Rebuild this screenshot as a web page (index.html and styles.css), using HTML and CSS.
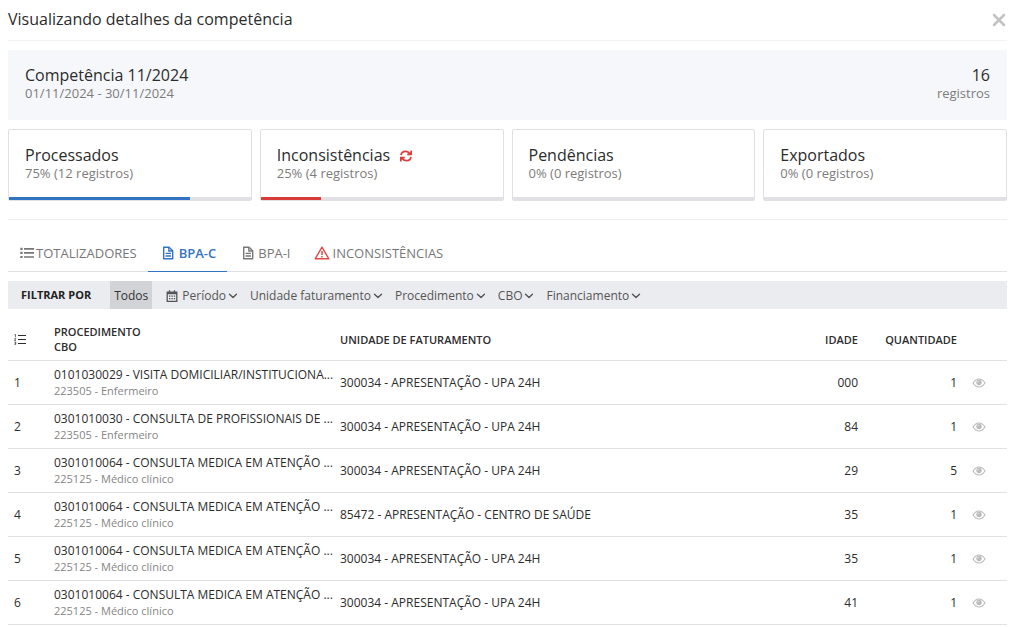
FILE: index.html
```html
<!DOCTYPE html>
<html lang="pt-BR">
<head>
<meta charset="utf-8">
<title>Visualizando detalhes da competência</title>
<link rel="stylesheet" href="styles.css">
</head>
<body>
<svg class="symbols" aria-hidden="true">
  <symbol id="i-eye" viewBox="0 0 14 10"><path d="M1 5Q3.600 1 7 1T13 5Q10.400 9 7 9T1 5Z" fill="none" stroke="currentColor" stroke-width="1.200"/><circle cx="7" cy="4.500" r="2.700" fill="currentColor"/><path d="M5.700 4.300Q5.800 3.200 7 3.100" fill="none" stroke="#fff" stroke-width=".6"/></symbol>
  <symbol id="i-down" viewBox="0 0 10 6"><path d="M1.500 1.200 5 4.600 8.500 1.200" fill="none" stroke="currentColor" stroke-width="1.400" stroke-linecap="round" stroke-linejoin="round"/></symbol>
  <symbol id="i-file" viewBox="0 0 12 14"><path d="M1.700 1.200H7L10.700 4.700V12.800H1.700Z" fill="none" stroke="currentColor" stroke-width="1.400" stroke-linejoin="round"/><path d="M6.800 1.200V5H10.700M3.500 7.400H9M3.500 10H9" fill="none" stroke="currentColor" stroke-width="1.300"/></symbol>
</svg>
<header class="header">
  <h1 class="title">Visualizando detalhes da competência</h1>
  <button class="close" type="button" aria-label="Fechar"><svg width="14" height="14" viewBox="0 0 14 14"><path d="M2 2 12 12M12 2 2 12" stroke="currentColor" stroke-width="2.500" stroke-linecap="round"/></svg></button>
</header>
<main>
  <section class="summary">
    <div><h2 class="name">Competência 11/2024</h2><p class="note">01/11/2024 - 30/11/2024</p></div>
    <div class="total"><p class="name">16</p><p class="note">registros</p></div>
  </section>
  <section class="cards">
    <article class="card"><div class="card-body"><h2 class="name">Processados</h2><p class="note">75% (12 registros)</p></div><div class="bar"><div class="fill blue" style="width:75%"></div></div></article>
    <article class="card"><div class="card-body"><h2 class="name with-action">Inconsistências <button class="refresh" type="button" aria-label="Reprocessar"><svg width="12" height="12" viewBox="0 0 12 12"><path d="M1 5.200C1.300 2.800 3.300 1.300 5.700 1.300C7.600 1.300 9 2.200 10.300 3.700M11.200.4V4.400H7.200M11 6.800C10.700 9.200 8.700 10.700 6.300 10.700C4.400 10.700 3 9.800 1.700 8.300M.8 11.600V7.600H4.800" fill="none" stroke="currentColor" stroke-width="1.700"/><path d="M9 4.400H11.200V2.200ZM3 7.600H.8V9.800Z" fill="currentColor"/></svg></button></h2><p class="note">25% (4 registros)</p></div><div class="bar"><div class="fill red" style="width:25%"></div></div></article>
    <article class="card"><div class="card-body"><h2 class="name">Pendências</h2><p class="note">0% (0 registros)</p></div><div class="bar"></div></article>
    <article class="card"><div class="card-body"><h2 class="name">Exportados</h2><p class="note">0% (0 registros)</p></div><div class="bar"></div></article>
  </section>
  <nav class="tabs">
    <a class="tab" href="#totalizadores"><span class="tab-icon"><svg width="14" height="12" viewBox="0 0 14 12"><path d="M.3 1.800H2.600M.3 5.900H2.600M.3 10H2.600" stroke="currentColor" stroke-width="2.200"/><path d="M4 1.800H14M4 5.900H14M4 10H14" stroke="currentColor" stroke-width="1.700"/></svg></span>TOTALIZADORES</a>
    <a class="tab active" href="#bpa-c"><span class="tab-icon"><svg width="12" height="14"><use href="#i-file"/></svg></span>BPA-C</a>
    <a class="tab" href="#bpa-i"><span class="tab-icon"><svg width="12" height="14"><use href="#i-file"/></svg></span>BPA-I</a>
    <a class="tab" href="#inconsistencias"><span class="tab-icon alert"><svg width="16" height="14" viewBox="0 0 16 14"><path d="M8 1.200 14.800 12.800H1.200Z" fill="none" stroke="currentColor" stroke-width="1.400" stroke-linejoin="round"/><path d="M8 5V9M8 10V11.500" stroke="currentColor" stroke-width="1.500"/></svg></span>INCONSISTÊNCIAS</a>
  </nav>
  <div class="filters">
    <strong class="filter-label">FILTRAR POR</strong>
    <button class="filter all" type="button">Todos</button>
    <button class="filter" type="button"><svg class="calendar" width="12" height="12" viewBox="0 0 12 12"><path d="M1.200 2.200H10.800V11.300H1.200ZM1 3.500H11M3.500.2V3M8.500.2V3" fill="none" stroke="currentColor" stroke-width="1.300"/><path d="M3 6.200H9.400M3 8.700H9.400" stroke="currentColor" stroke-width="1.300" stroke-dasharray="1.400 1"/></svg>Período<svg width="10" height="6"><use href="#i-down"/></svg></button>
    <button class="filter" type="button">Unidade faturamento<svg width="10" height="6"><use href="#i-down"/></svg></button>
    <button class="filter" type="button">Procedimento<svg width="10" height="6"><use href="#i-down"/></svg></button>
    <button class="filter" type="button">CBO<svg width="10" height="6"><use href="#i-down"/></svg></button>
    <button class="filter" type="button">Financiamento<svg width="10" height="6"><use href="#i-down"/></svg></button>
  </div>
  <table class="table">
    <colgroup><col class="c-num"><col class="c-proc"><col><col class="c-age"><col class="c-qty"><col class="c-act"></colgroup>
    <thead><tr>
      <th class="order" aria-label="Ordem"><svg width="12" height="11" viewBox="0 0 12 11"><path d="M4 1.500H12M4 5.500H12M4 9.500H12" stroke="currentColor" stroke-width="1.100"/><path d="M.5.5H1.500V3M.4 4.300H1.800L.5 6.400H2M.4 8H1.800V10.400H.4M.6 9.200H1.800" fill="none" stroke="currentColor" stroke-width=".7"/></svg></th>
      <th>PROCEDIMENTO<br>CBO</th><th>UNIDADE DE FATURAMENTO</th><th class="num">IDADE</th><th class="num">QUANTIDADE</th><th></th>
    </tr></thead>
    <tbody>
      <tr><td>1</td><td>0101030029 - VISITA DOMICILIAR/INSTITUCIONA...<span class="cbo">223505 - Enfermeiro</span></td><td>300034 - APRESENTAÇÃO - UPA 24H</td><td class="num">000</td><td class="num">1</td><td><button class="view" type="button" aria-label="Visualizar"><svg width="14" height="10"><use href="#i-eye"/></svg></button></td></tr>
      <tr><td>2</td><td>0301010030 - CONSULTA DE PROFISSIONAIS DE ...<span class="cbo">223505 - Enfermeiro</span></td><td>300034 - APRESENTAÇÃO - UPA 24H</td><td class="num">84</td><td class="num">1</td><td><button class="view" type="button" aria-label="Visualizar"><svg width="14" height="10"><use href="#i-eye"/></svg></button></td></tr>
      <tr><td>3</td><td>0301010064 - CONSULTA MEDICA EM ATENÇÃO ...<span class="cbo">225125 - Médico clínico</span></td><td>300034 - APRESENTAÇÃO - UPA 24H</td><td class="num">29</td><td class="num">5</td><td><button class="view" type="button" aria-label="Visualizar"><svg width="14" height="10"><use href="#i-eye"/></svg></button></td></tr>
      <tr><td>4</td><td>0301010064 - CONSULTA MEDICA EM ATENÇÃO ...<span class="cbo">225125 - Médico clínico</span></td><td>85472 - APRESENTAÇÃO - CENTRO DE SAÚDE</td><td class="num">35</td><td class="num">1</td><td><button class="view" type="button" aria-label="Visualizar"><svg width="14" height="10"><use href="#i-eye"/></svg></button></td></tr>
      <tr><td>5</td><td>0301010064 - CONSULTA MEDICA EM ATENÇÃO ...<span class="cbo">225125 - Médico clínico</span></td><td>300034 - APRESENTAÇÃO - UPA 24H</td><td class="num">35</td><td class="num">1</td><td><button class="view" type="button" aria-label="Visualizar"><svg width="14" height="10"><use href="#i-eye"/></svg></button></td></tr>
      <tr><td>6</td><td>0301010064 - CONSULTA MEDICA EM ATENÇÃO ...<span class="cbo">225125 - Médico clínico</span></td><td>300034 - APRESENTAÇÃO - UPA 24H</td><td class="num">41</td><td class="num">1</td><td><button class="view" type="button" aria-label="Visualizar"><svg width="14" height="10"><use href="#i-eye"/></svg></button></td></tr>
    </tbody>
  </table>
</main>
</body>
</html>
```
FILE: styles.css
```css
* { box-sizing: border-box; }
body { margin: 0; padding: 0 8px; background: #fff; color: #2c2c2c; font: 12px/16px "Open Sans", sans-serif; }
h1, h2, p { margin: 0; font-weight: 400; }
button { margin: 0; padding: 0; border: 0; background: none; font: inherit; color: inherit; cursor: pointer; }
svg { flex: none; }
.symbols { display: none; }

.header { display: flex; justify-content: space-between; align-items: center; height: 41px; border-bottom: 1px solid #f3f3f3; }
.title { font-size: 16px; line-height: 22px; padding-bottom: 2px; }
.close { display: flex; padding: 1px; color: #c2c2c2; }

.summary { display: flex; justify-content: space-between; margin-top: 9px; padding: 16px 17px 19px; background: #f6f7fb; border-radius: 2px; }
.total { text-align: right; }
.name { font-size: 16px; line-height: 19px; }
.name.with-action { display: flex; align-items: center; gap: 10px; }
.note { font-size: 13px; line-height: 16px; color: #7c7c7c; }

.cards { display: grid; grid-template-columns: repeat(4, 1fr); gap: 8px; padding: 9px 0 18px; border-bottom: 1px solid #ececec; }
.card { border: 1px solid #e1e1e5; border-radius: 2px; }
.card-body { padding: 16px; }
.bar { height: 3px; background: #e1e1e5; }
.fill { height: 3px; }
.blue { background: #3273c4; }
.red { background: #d83b38; }
.refresh { color: #dc3c37; }
.refresh svg { display: block; }

.tabs { display: flex; margin-top: 16px; border-bottom: 1px solid #dfdfe4; }
.tab { display: flex; align-items: center; gap: 2px; height: 36px; margin-bottom: -1px; padding: 0 11px 2px 12px; font-size: 13px; color: #777; text-decoration: none; border-bottom: 1px solid transparent; }
.tab-icon { display: flex; justify-content: center; width: 17px; }
.tab:first-child .tab-icon { width: 14px; }
.tab.active { color: #3273c4; font-weight: 600; border-color: #3273c4; }
.tab-icon.alert { color: #dc4b48; }

.filters { display: flex; margin-top: 9px; padding-left: 13px; background: #ebecf0; color: #555; }
.filter-label { align-self: center; margin-right: 19px; font-size: 11px; color: #222; }
.filter { display: flex; align-items: center; gap: 2px; height: 28px; margin-right: 12px; padding-top: 1px; }
.filter.all { margin-right: 14px; padding: 1px 4px 0; background: #d2d3d7; color: #333; }
.calendar { margin-right: 2px; }

.table { width: 100%; margin-top: 10px; border-collapse: collapse; table-layout: fixed; }
.c-num { width: 40px; }
.c-proc { width: 286px; }
.c-age { width: 90px; }
.c-qty { width: 99px; }
.c-act { width: 50px; }
.table th, .table td { height: 44px; padding: 2px 0 0 6px; border-bottom: 1px solid #e1e1e1; text-align: left; white-space: nowrap; }
.table th { height: 41px; padding-top: 0; font-size: 11px; line-height: 15px; font-weight: 600; }
.table .num { padding-left: 0; text-align: right; }
.table td:last-child { padding-left: 15px; }
.order svg, .view svg { display: block; }
.view { display: block; color: #bbb; }
.cbo { display: block; font-size: 11px; color: #858585; }
```
